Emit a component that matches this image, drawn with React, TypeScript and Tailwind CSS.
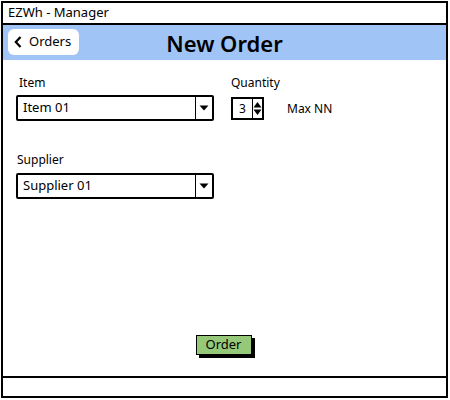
import React from "react";

const font = { fontFamily: '"Noto Sans", "Open Sans", sans-serif' };

function Caret() {
  return (
    <svg width="10" height="6" viewBox="0 0 10 6">
      <path d="M0.5 0.5 L9.5 0.5 L5 5.5 Z" fill="#000" />
    </svg>
  );
}

function Select({ value }: { value: string }) {
  return (
    <div className="flex h-[26px] w-[198px] items-stretch rounded-[2px] border-2 border-black bg-white">
      <div className="flex flex-1 items-center pl-[5px] text-[13px] text-black">{value}</div>
      <div className="flex w-[17px] items-center justify-center border-l-[1.5px] border-black">
        <Caret />
      </div>
    </div>
  );
}

export default function App() {
  return (
    <div className="h-[400px] w-[450px] bg-white pl-[1px] pt-[1px]" style={font}>
      <div className="flex h-[397px] w-[447px] flex-col border-2 border-black">
        <div className="flex h-[22px] items-center border-b-2 border-black pl-[5px] text-[13px] text-black">
          EZWh - Manager
        </div>
        <div className="relative flex h-[35px] items-center justify-center bg-[#a0c4f5]">
          <div className="absolute left-[5px] top-[4px] flex h-[26px] w-[71px] items-center gap-[7px] rounded-[6px] bg-white pl-[6px] text-[13px] text-black">
            <svg width="8" height="12" viewBox="0 0 8 12">
              <path d="M6.5 1 L1.8 6 L6.5 11" fill="none" stroke="#000" strokeWidth="2.2" />
            </svg>
            <span>Orders</span>
          </div>
          <div className="text-[22px] font-semibold leading-none text-black">New Order</div>
        </div>
        <div className="flex flex-1 flex-col">
          <div className="flex pl-[13px] pt-[15px]">
            <div className="flex w-[215px] flex-col">
              <div className="h-[16px] pl-[3px] text-[12px] leading-[16px] text-black">Item</div>
              <div className="mt-[4px]">
                <Select value="Item 01" />
              </div>
              <div className="mt-[31px] h-[16px] pl-[1px] text-[12px] leading-[16px] text-black">Supplier</div>
              <div className="mt-[5px]">
                <Select value="Supplier 01" />
              </div>
            </div>
            <div className="flex flex-col">
              <div className="h-[16px] text-[12px] leading-[16px] text-black">Quantity</div>
              <div className="mt-[6px] flex items-center">
                <div className="flex h-[23px] w-[33px] items-stretch border-2 border-black bg-white">
                  <div className="flex w-[19px] items-center justify-center text-[12px]">3</div>
                  <div className="flex flex-1 items-center justify-center border-l-[1.5px] border-black">
                    <svg width="9" height="15" viewBox="0 0 9 15">
                      <path d="M0.5 6.5 L8.5 6.5 L4.5 1 Z" fill="#000" />
                      <path d="M0.5 8.5 L8.5 8.5 L4.5 14 Z" fill="#000" />
                    </svg>
                  </div>
                </div>
                <div className="ml-[23px] text-[12px] text-black">Max NN</div>
              </div>
            </div>
          </div>
          <div className="flex-1" />
          <div className="mb-[21px] flex justify-center">
            <div className="ml-[-2px] flex h-[20px] w-[56px] items-center justify-center border-[1.5px] border-black bg-[#96c879] text-[13px] text-black shadow-[3px_3px_0_#000]">
              Order
            </div>
          </div>
        </div>
        <div className="h-[20px] border-t-2 border-black" />
      </div>
    </div>
  );
}
